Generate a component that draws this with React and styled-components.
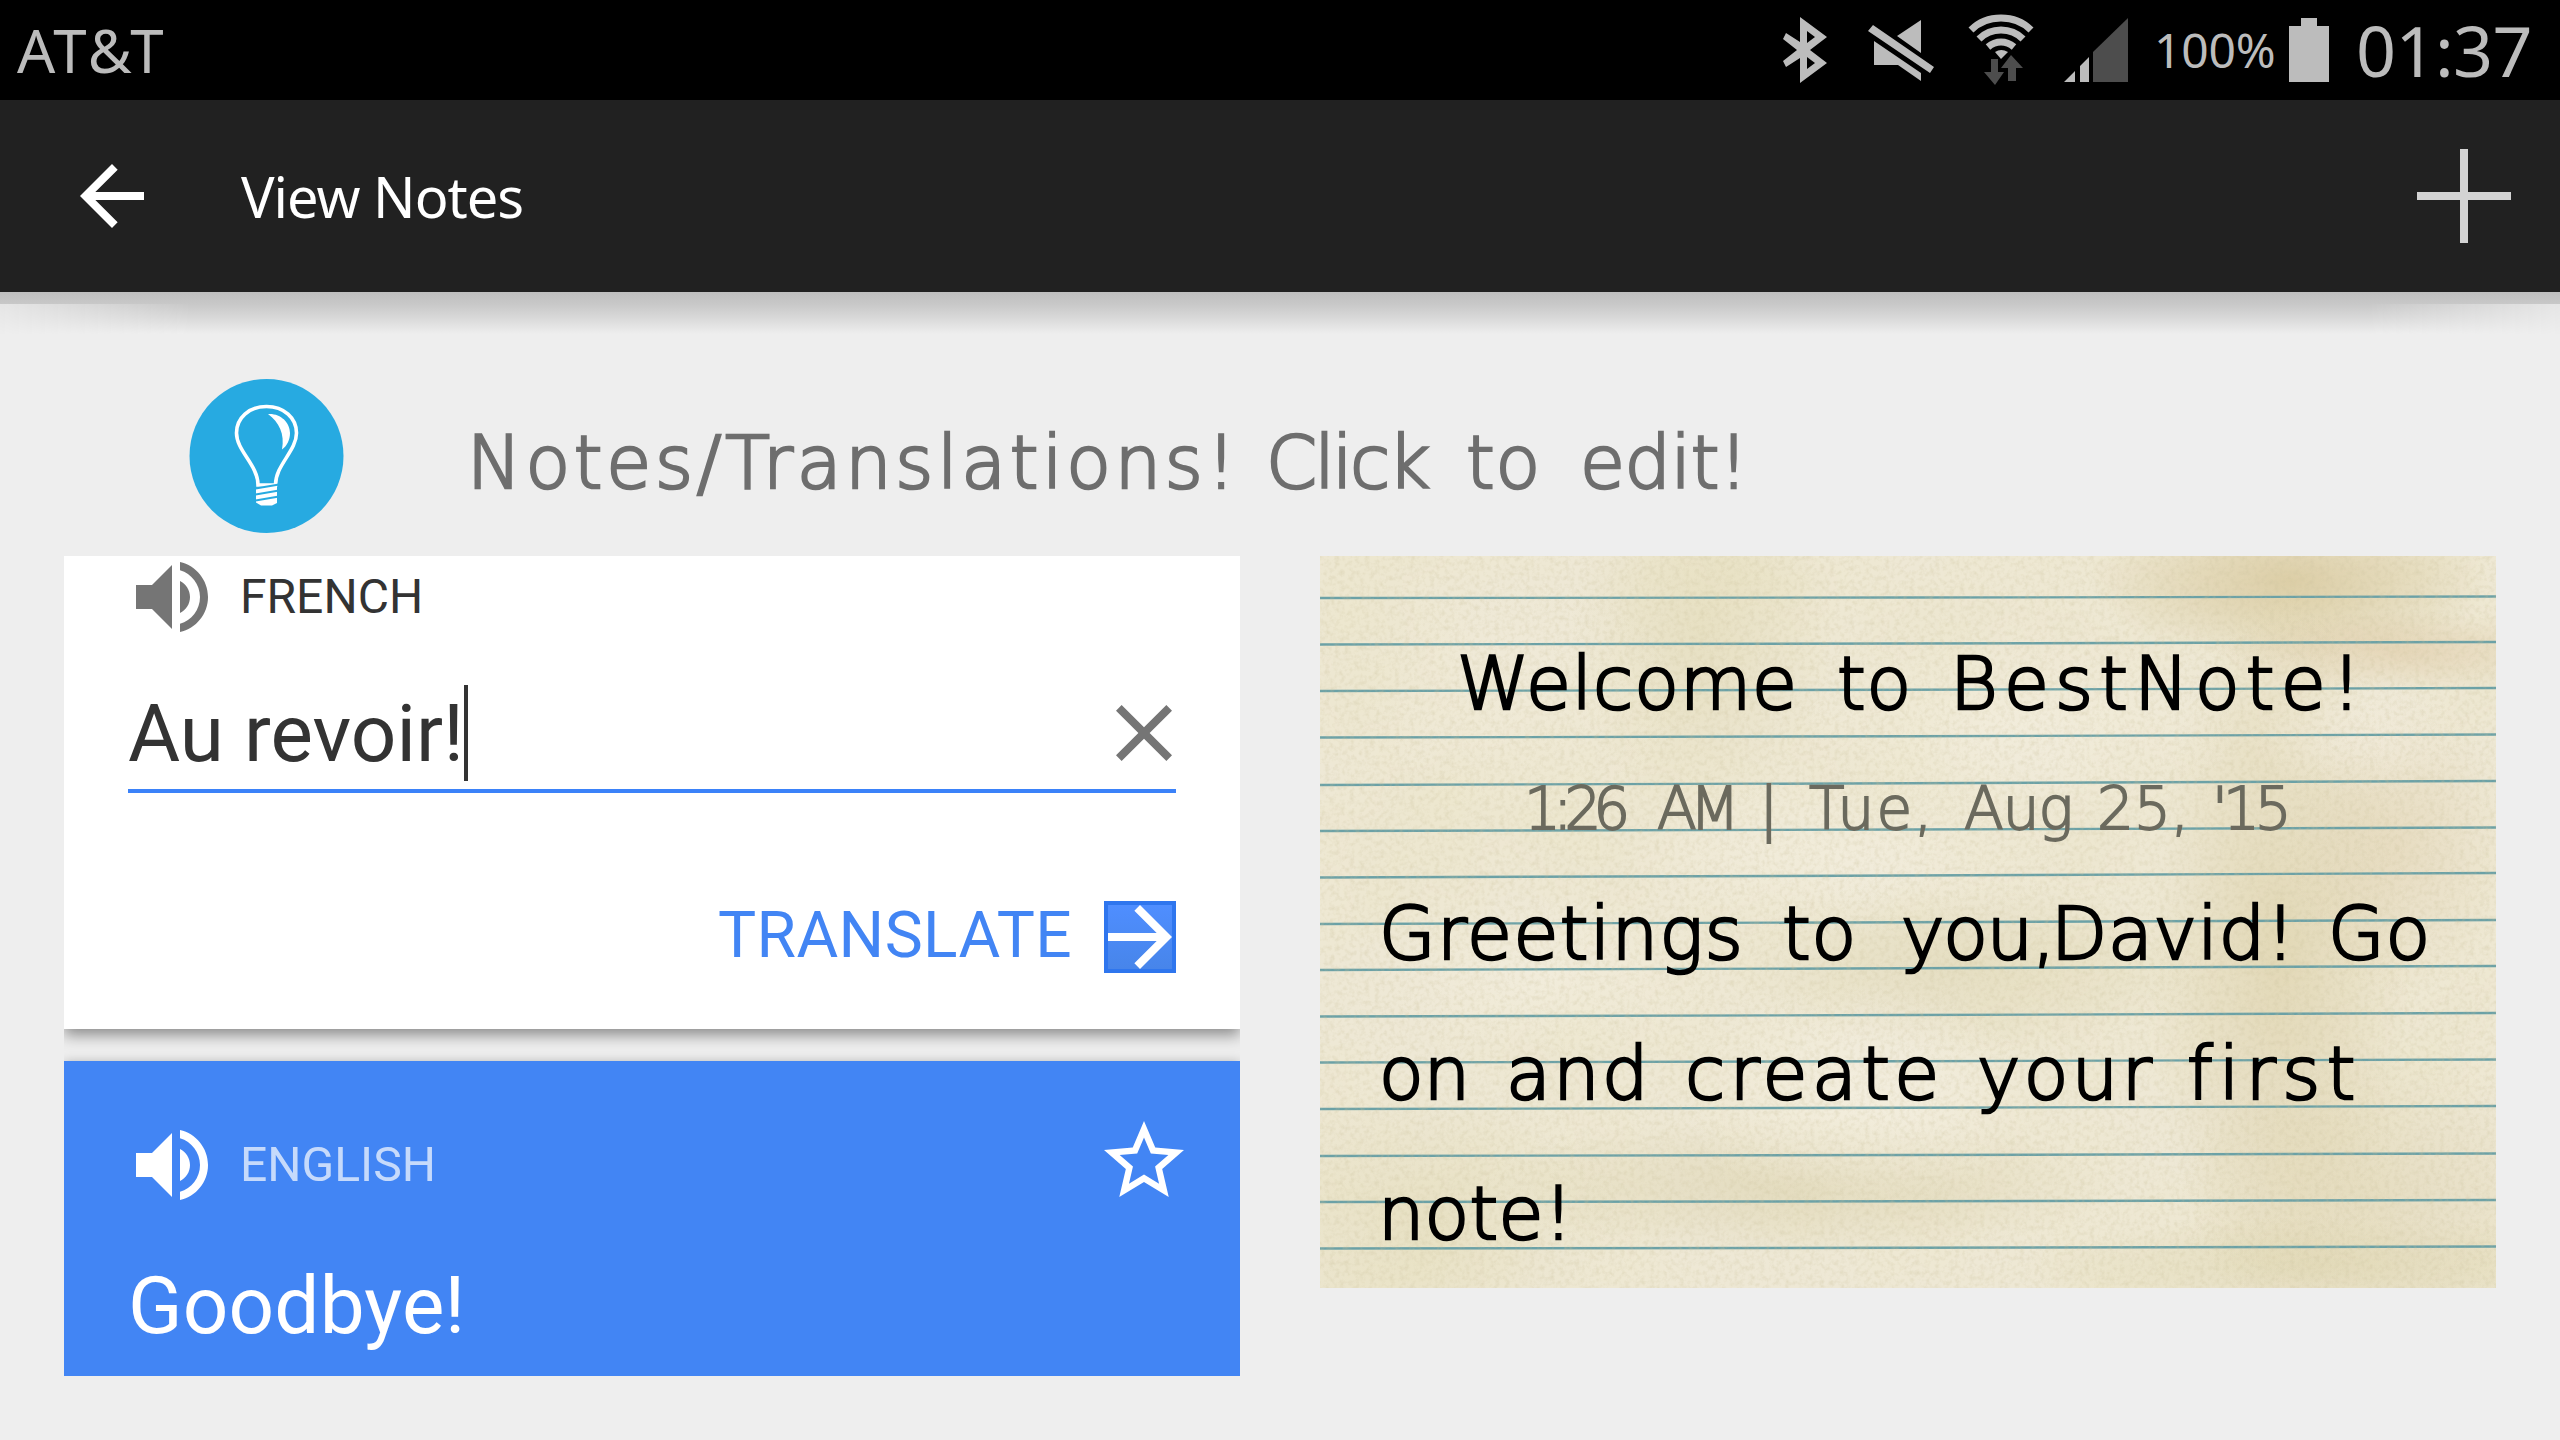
import React from 'react';
import styled, { createGlobalStyle } from 'styled-components';

const Global = createGlobalStyle`
  * { box-sizing: border-box; }
  html, body { margin: 0; padding: 0; background: #eeeeee; overflow: hidden; }
  svg { display: block; flex: none; }
`;

const Screen = styled.div`
  width: 2560px;
  height: 1440px;
  display: flex;
  flex-direction: column;
  background: #eeeeee;
  overflow: hidden;
  font-family: Roboto, 'Liberation Sans', sans-serif;
`;

const StatusBar = styled.header`
  height: 100px;
  flex: none;
  display: flex;
  align-items: center;
  justify-content: space-between;
  padding: 0 25px 0 17px;
  background: #000;
  color: #bcbcbc;
  font-family: 'Noto Sans', sans-serif;
`;

const Carrier = styled.span`
  font-size: 60px;
  line-height: 100px;
  letter-spacing: 2.2px;
`;

const StatusIcons = styled.div`
  display: flex;
  align-items: center;
  height: 100px;
`;

const Percent = styled.span`
  font-size: 48px;
  line-height: 100px;
  width: 135px;
  letter-spacing: -0.2px;
  margin-left: -4px;
`;

const Clock = styled.span`
  font-size: 70px;
  line-height: 103px;
  width: 179px;
  margin-left: 27px;
  letter-spacing: -0.6px;
  white-space: nowrap;
`;

const AppBar = styled.nav`
  position: relative;
  height: 192px;
  flex: none;
  display: flex;
  align-items: center;
  padding: 0 48px 0 64px;
  background: #212121;

  &::before,
  &::after {
    content: '';
    position: absolute;
    left: 0;
    right: 0;
  }
  &::before {
    top: 192px;
    height: 12px;
    background: linear-gradient(#bfbfbf, #c8c8c8);
  }
  &::after {
    top: 204px;
    height: 30px;
    background: linear-gradient(#c8c8c8, #dadada 50%, #eeeeee);
    mask-image: linear-gradient(90deg, rgba(0, 0, 0, 0.2), #000 190px, #000 calc(100% - 190px), rgba(0, 0, 0, 0.2));
  }
`;

const Title = styled.h1`
  flex: 1;
  margin: 0 0 0 81px;
  color: #fff;
  font: 400 56px/190px 'Noto Sans', sans-serif;
  letter-spacing: -1px;
`;

const Banner = styled.section`
  height: 264px;
  flex: none;
  display: flex;
  padding: 87px 0 0 189px;
`;

const BannerText = styled.div`
  display: flex;
  height: 172px;
  margin-left: 123px;
  color: #6e6e6e;
`;

const Columns = styled.main`
  display: flex;
  align-items: flex-start;
  padding: 0 64px;
  gap: 80px;
`;

const TranslateColumn = styled.section`
  width: 1176px;
  overflow: hidden;
  display: flex;
  flex-direction: column;
  gap: 32px;
`;

const SourceCard = styled.div`
  height: 473px;
  padding: 0 64px;
  background: #fff;
  color: #333;
  box-shadow: 0 6px 14px rgba(0, 0, 0, 0.42);
`;

const ResultCard = styled.div`
  height: 315px;
  padding: 56px 64px 0;
  background: #4285f4;
  color: #fff;
  box-shadow: 0 1px 10px rgba(0, 0, 0, 0.26);
`;

const LanguageRow = styled.div`
  display: flex;
  align-items: center;
  gap: 20px;
  height: ${(p) => p.$height}px;
  margin: 0 -16px 0 -4px;
`;

const Language = styled.span`
  flex: 1;
  font-size: 48px;
  padding-bottom: 2px;
  opacity: ${(p) => (p.$faded ? 0.7 : 1)};
`;

const StarButton = styled.span`
  margin-top: -8px;
`;

const Field = styled.div`
  display: flex;
  align-items: center;
  height: 108px;
  margin-top: 47px;
  padding-bottom: 8px;
  border-bottom: 4px solid #3b82f9;
`;

const FieldText = styled.span`
  font-size: 80px;
  line-height: 96px;
  padding-top: 2px;
  letter-spacing: 0.1px;
`;

const Caret = styled.span`
  width: 4px;
  height: 96px;
  background: #333;
`;

const ClearButton = styled.span`
  margin: 0 -16px 0 auto;
`;

const ActionRow = styled.div`
  display: flex;
  align-items: center;
  justify-content: flex-end;
  gap: 32px;
  height: 72px;
  margin-top: 108px;
`;

const ActionLabel = styled.span`
  color: #4285f4;
  font-size: 64px;
  line-height: 68px;
  padding-bottom: 2px;
  letter-spacing: 0.4px;
`;

const ActionBox = styled.span`
  width: 72px;
  height: 72px;
  display: flex;
  align-items: center;
  justify-content: center;
  border: 4px solid #2f76ee;
  background: linear-gradient(#4f8eff, #4785ea);
`;

const Result = styled.div`
  margin-top: 45px;
  font-size: 80px;
  line-height: 96px;
  letter-spacing: 0.2px;
`;

const Note = styled.article`
  width: 1176px;
  height: 732px;
  position: relative;
  overflow: hidden;
  background: #ece6cd;
`;

const PaperSvg = styled.svg`
  position: absolute;
  inset: 0;
`;

const NoteBody = styled.div`
  position: relative;
  display: flex;
  flex-direction: column;
  padding-top: 58px;
`;

const NoteLine = styled.div`
  display: flex;
  height: ${(p) => p.$height || 140}px;
  line-height: ${(p) => p.$height || 140}px;
  padding-left: ${(p) => p.$indent}px;
  color: ${(p) => p.$color || '#000'};
`;

const Word = styled.span`
  flex: none;
  width: ${(p) => p.$w}px;
  font-family: 'DejaVu Sans', sans-serif;
  font-weight: 200;
  font-size: ${(p) => p.$size || 73}px;
  letter-spacing: ${(p) => p.$ls || 0}px;
  line-height: inherit;
  white-space: pre;
  -webkit-text-stroke: ${(p) => (p.$size ? 1.8 : 2.6)}px currentColor;
  stroke-linejoin: round;
`;

const BannerWord = styled(Word)`
  line-height: 167px;
`;

const Icon = ({ color, size = 96, d }) => (
  <svg width={size} height={size} viewBox="0 0 24 24" fill={color}><path d={d} /></svg>
);

const BACK = 'M20 11H7.83l5.59-5.59L12 4l-8 8 8 8 1.41-1.41L7.83 13H20v-2z';
const FORWARD = 'M12 4l-1.41 1.41L16.17 11H4v2h12.17l-5.58 5.59L12 20l8-8z';
const CLOSE = 'M19 6.41L17.59 5 12 10.59 6.41 5 5 6.41 10.59 12 5 17.59 6.41 19 12 13.41 17.59 19 19 17.59 13.41 12z';
const VOLUME = 'M3 9v6h4l5 5V4L7 9H3zm13.5 3c0-1.77-1.02-3.29-2.5-4.03v8.05c1.48-.73 2.5-2.25 2.5-4.02zM14 3.23v2.06c2.89.86 5 3.54 5 6.71s-2.11 5.85-5 6.71v2.06c4.01-.91 7-4.49 7-8.77s-2.99-7.86-7-8.77z';
const STAR = 'M22 9.24l-7.19-.62L12 2 9.19 8.63 2 9.24l5.46 4.73L5.82 21 12 17.27 18.18 21l-1.63-7.03L22 9.24zM12 15.4l-3.76 2.27 1-4.28-3.32-2.88 4.38-.38L12 6.1l1.71 4.04 4.38.38-3.32 2.88 1 4.28L12 15.4z';

const Indicators = () => (
  <svg width="376" height="100" viewBox="1782 0 376 100" fill="#bcbcbc">
    <path fillRule="evenodd" d="M1800 17L1827 37L1810 50L1827 63L1800 83V58L1786 67L1783 61L1797 50L1783 39L1786 33L1800 42ZM1807 31V43L1815 37ZM1807 57V69L1815 63Z" />
    <path d="M1921 20V53L1897 36Z M1874 41V65H1898L1921 81V73Z M1873 25L1934 67L1930 73L1868 31Z" />
    <g fill="none" stroke="#bcbcbc" strokeWidth="7">
      <path d="M1971 30Q1983 18 2001 18Q2019 18 2031 30" />
      <path d="M1979 39Q1988 30 2001 30Q2014 30 2023 39" />
      <path d="M1988 47Q1994 42 2001 42Q2008 42 2014 47" />
    </g>
    <path d="M1995 52Q2001 48 2008 52L2001 59Z" />
    <g fill="#4d4d4d">
      <path d="M1991 59H1998V72H2004L1995 85L1984 72H1991Z" />
      <path d="M2011 55L2023 68H2016V81H2008V68H2001Z" />
      <path d="M2093 52L2128 18V82H2093Z" />
    </g>
    <path d="M2064 82L2075 71V82ZM2080 66L2089 57V82H2080Z" />
  </svg>
);

const Bulb = () => (
  <svg width="155" height="155" viewBox="189 379 155 155">
    <circle cx="266.5" cy="456" r="77" fill="#27aae1" />
    <path d="M258 485C258 465 236.500 451 236.500 433C236.500 418 249 406.500 266.500 406.500C284 406.500 296.500 418 296.500 433C296.500 451 275.500 465 275.500 485Z" fill="none" stroke="#fff" strokeWidth="3.600" />
    <path d="M268 414C280 413 290 422 290 433C290 440 287 446 282 449.500C285 434 279 422 268 414Z" fill="#fff" />
    <path d="M256 488L277 484V503L272 505.500H261L256 502.500Z" fill="#fff" />
    <path d="M254 488.800L279 484.600M254 494.800L279 490.600M254 500.800L279 496.600" stroke="#27aae1" strokeWidth="2" />
  </svg>
);

const RULES = [
  [42, 40.5], [88.5, 86], [135, 132], [181.5, 178.5], [229, 225], [275, 271.5], [321.500, 317], [368, 364],
  [414, 410], [460.5, 457], [506.5, 503.5], [553, 550], [600, 597.5], [646, 644], [692.5, 690.5],
];

const STAINS = [
  [970, 25, 200, 80, '#cbb57c', 0.5], [1080, 95, 180, 40, '#d3b282', 0.32], [960, 400, 130, 360, '#d0c08c', 0.38],
  [1080, 290, 110, 150, '#d8c294', 0.3], [380, 80, 130, 180, '#d8cf9c', 0.32], [480, 630, 320, 70, '#cfc496', 0.35],
  [100, 660, 200, 130, '#ddd5aa', 0.35], [640, 410, 240, 90, '#d5cc9e', 0.35], [1060, 640, 200, 140, '#d5c79a', 0.32],
  [1000, 710, 300, 50, '#d3c998', 0.3],
  [540, 540, 180, 110, '#f5f0e2', 0.75], [700, 170, 220, 100, '#f4efe0', 0.6], [230, 420, 170, 80, '#f4efe0', 0.6],
  [520, 300, 230, 80, '#f4efe0', 0.6], [200, 140, 160, 120, '#f2ecdb', 0.5], [1040, 180, 110, 60, '#f5efe2', 0.5],
];

const Paper = () => (
  <PaperSvg width="1176" height="732" viewBox="0 0 1176 732">
    <defs>
      <filter id="grain" x="0" y="0" width="100%" height="100%">
        <feTurbulence type="fractalNoise" baseFrequency="0.2" numOctaves="3" seed="4" />
        <feColorMatrix values="0 0 0 0 0.60  0 0 0 0 0.54  0 0 0 0 0.34  0.7 0 0 0 -0.29" />
      </filter>
      <filter id="mottle" x="0" y="0" width="100%" height="100%">
        <feTurbulence type="fractalNoise" baseFrequency="0.006 0.006" numOctaves="4" seed="11" />
        <feColorMatrix values="0 0 0 0 0.84  0 0 0 0 0.79  0 0 0 0 0.58  1.1 0 0 0 -0.38" />
      </filter>
      {STAINS.map(([, , , , color, alpha], i) => (
        <radialGradient id={`stain${i}`} key={i}>
          <stop offset="0" stopColor={color} stopOpacity={alpha} />
          <stop offset="0.5" stopColor={color} stopOpacity={alpha * 0.55} />
          <stop offset="1" stopColor={color} stopOpacity="0" />
        </radialGradient>
      ))}
    </defs>
    <rect width="1176" height="732" fill="#eee8d5" />
    <rect width="1176" height="732" filter="url(#mottle)" />
    {STAINS.map(([cx, cy, rx, ry], i) => (
      <ellipse key={i} cx={cx} cy={cy} rx={rx} ry={ry} fill={`url(#stain${i})`} />
    ))}
    {RULES.map(([a, b]) => (
      <path key={a} d={`M0 ${a}L588 ${(a + b) / 2 + 0.3}L1176 ${b}`} fill="none" stroke="#6ba1a6" strokeWidth="2.400" />
    ))}
    <rect width="1176" height="732" filter="url(#grain)" />
  </PaperSvg>
);

export default function App() {
  return (
    <Screen>
      <Global />
      <StatusBar>
        <Carrier>AT&amp;T</Carrier>
        <StatusIcons>
          <Indicators />
          <Percent>100%</Percent>
          <svg width="40" height="64" viewBox="0 0 40 64" fill="#bcbcbc"><path d="M12 0H28V8H40V64H0V8H12Z" /></svg>
          <Clock>01:37</Clock>
        </StatusIcons>
      </StatusBar>
      <AppBar>
        <Icon color="#fff" d={BACK} />
        <Title>View Notes</Title>
        <svg width="96" height="96" viewBox="0 0 96 96"><path d="M48 1V95M1 48H95" stroke="#d3d3d3" strokeWidth="8" /></svg>
      </AppBar>
      <Banner>
        <Bulb />
        <BannerText>
          <BannerWord $w={799} $ls={3.8}>Notes/Translations!</BannerWord>
          <BannerWord $w={200} $ls={-2.5}>Click</BannerWord>
          <BannerWord $w={114} $ls={1}>to</BannerWord>
          <BannerWord $w={170} $ls={-0.3}>edit!</BannerWord>
        </BannerText>
      </Banner>
      <Columns>
        <TranslateColumn>
          <SourceCard>
            <LanguageRow $height={82}>
              <Icon color="#757575" d={VOLUME} />
              <Language>FRENCH</Language>
            </LanguageRow>
            <Field>
              <FieldText>Au revoir!</FieldText>
              <Caret />
              <ClearButton><Icon color="#757575" d={CLOSE} /></ClearButton>
            </Field>
            <ActionRow>
              <ActionLabel>TRANSLATE</ActionLabel>
              <ActionBox><Icon color="#fff" d={FORWARD} /></ActionBox>
            </ActionRow>
          </SourceCard>
          <ResultCard>
            <LanguageRow $height={96}>
              <Icon color="#fff" d={VOLUME} />
              <Language $faded>ENGLISH</Language>
              <StarButton><Icon color="#fff" d={STAR} /></StarButton>
            </LanguageRow>
            <Result>Goodbye!</Result>
          </ResultCard>
        </TranslateColumn>
        <Note>
          <Paper />
          <NoteBody>
            <NoteLine $indent={137}>
              <Word $w={380} $ls={1}>Welcome</Word>
              <Word $w={113} $ls={1}>to</Word>
              <Word $w={430} $ls={6.2}>BestNote!</Word>
            </NoteLine>
            <NoteLine $indent={204} $height={110} $color="#6b6a5e">
              <Word $size={58} $w={133} $ls={-8}>1:26</Word>
              <Word $size={58} $w={102} $ls={-7}>AM</Word>
              <Word $size={58} $w={50}>|</Word>
              <Word $size={58} $w={155} $ls={2}>Tue,</Word>
              <Word $size={58} $w={133} $ls={-1}>Aug</Word>
              <Word $size={58} $w={115}>25,</Word>
              <Word $size={58} $w={85} $ls={-5}>'15</Word>
            </NoteLine>
            <NoteLine $indent={59}>
              <Word $w={403} $ls={1.5}>Greetings</Word>
              <Word $w={119} $ls={1}>to</Word>
              <Word $w={150} $ls={-1}>you,</Word>
              <Word $w={277} $ls={0.8}>David!</Word>
              <Word $w={110} $ls={1}>Go</Word>
            </NoteLine>
            <NoteLine $indent={59}>
              <Word $w={127}>on</Word>
              <Word $w={179} $ls={2.5}>and</Word>
              <Word $w={292} $ls={4.5}>create</Word>
              <Word $w={210} $ls={3.5}>your</Word>
              <Word $w={180} $ls={6.4}>first</Word>
            </NoteLine>
            <NoteLine $indent={58}>
              <Word $w={200} $ls={0.3}>note!</Word>
            </NoteLine>
          </NoteBody>
        </Note>
      </Columns>
    </Screen>
  );
}
